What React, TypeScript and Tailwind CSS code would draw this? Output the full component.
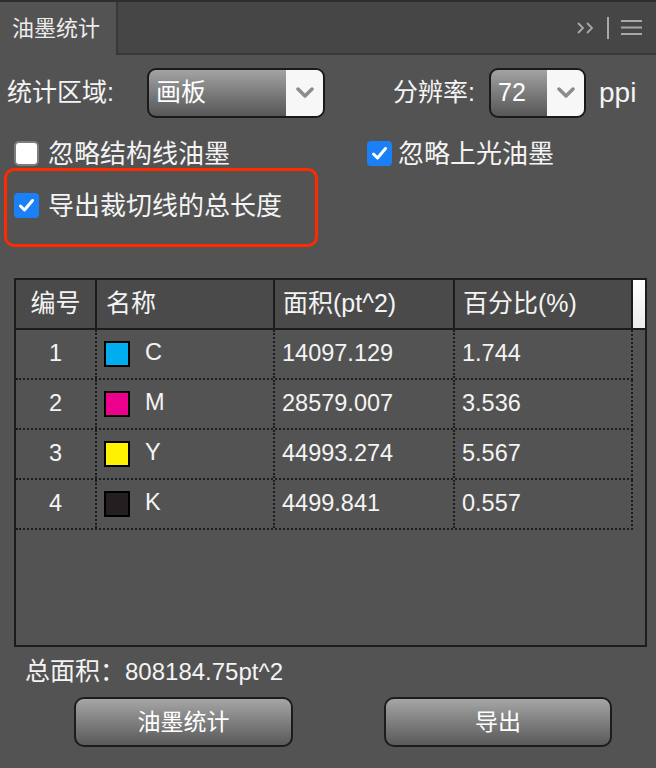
import React from 'react';

const font = { fontFamily: '"Liberation Sans", "Noto Sans CJK SC", sans-serif' };

const Chevron = () => (
  <svg width="18" height="12" viewBox="0 0 18 12">
    <polyline points="2,2 9,9 16,2" fill="none" stroke="#8c8c8c" strokeWidth="3.5" strokeLinecap="round" strokeLinejoin="round" />
  </svg>
);

const Select: React.FC<{ value: string; width: string; text: string }> = ({ value, width, text }) => (
  <div className={`flex h-[50px] ${width} overflow-hidden rounded-[9px] border-2 border-[#1a1a1a] bg-gradient-to-b from-[#a3a3a3] to-[#575757]`}>
    <div className={`flex flex-1 items-center pl-[7px] ${text} text-white`}>{value}</div>
    <div className="flex w-[37px] items-center justify-center bg-[#f7f7f7]">
      <Chevron />
    </div>
  </div>
);

const Check: React.FC<{ on: boolean }> = ({ on }) =>
  on ? (
    <div className="flex h-[25px] w-[25px] shrink-0 items-center justify-center rounded-[4px] bg-[#1b80f5]">
      <svg width="17" height="15" viewBox="0 0 17 15">
        <polyline points="2.5,8 6.5,12 14.5,2.5" fill="none" stroke="white" strokeWidth="3" strokeLinecap="round" strokeLinejoin="round" />
      </svg>
    </div>
  ) : (
    <div className="h-[25px] w-[25px] shrink-0 rounded-[5px] border-2 border-[#7d7d7d] bg-white" />
  );

const rows = [
  { n: '1', color: 'bg-[#00aeef]', name: 'C', area: '14097.129', pct: '1.744' },
  { n: '2', color: 'bg-[#ec008c]', name: 'M', area: '28579.007', pct: '3.536' },
  { n: '3', color: 'bg-[#fff200]', name: 'Y', area: '44993.274', pct: '5.567' },
  { n: '4', color: 'bg-[#231f20]', name: 'K', area: '4499.841', pct: '0.557' },
];

export default function App() {
  return (
    <div className="h-[768px] w-[656px] overflow-hidden bg-[#535353] text-[24px] text-[#f4f4f4]" style={font}>
      {/* panel tab bar */}
      <div className="flex h-[55px] border-t-2 border-[#2e2e2e]">
        <div className="flex w-[116px] items-center pl-[12px] text-[22px] text-[#ececec]">油墨统计</div>
        <div className="flex flex-1 items-center justify-end gap-[12px] border-b-2 border-l-2 border-[#383838] bg-[#464646] pr-[14px]">
          <svg width="19" height="14" viewBox="0 0 19 14">
            <polyline points="2,2 7,7 2,12" fill="none" stroke="#a8a8a8" strokeWidth="1.8" />
            <polyline points="11,2 16,7 11,12" fill="none" stroke="#a8a8a8" strokeWidth="1.8" />
          </svg>
          <div className="h-[22px] w-[2px] bg-[#a8a8a8]" />
          <svg width="21" height="15" viewBox="0 0 21 15">
            <rect x="0" y="0" width="21" height="2" fill="#a8a8a8" />
            <rect x="0" y="6.5" width="21" height="2" fill="#a8a8a8" />
            <rect x="0" y="13" width="21" height="2" fill="#a8a8a8" />
          </svg>
        </div>
      </div>

      {/* area / resolution */}
      <div className="mt-[13px] flex h-[50px] items-center pl-[7px] text-[25px]">
        <div className="w-[140px]">统计区域:</div>
        <Select value="画板" width="w-[178px]" text="text-[25px]" />
        <div className="ml-[68px] w-[96px]">分辨率:</div>
        <Select value="72" width="w-[97px]" text="text-[25px]" />
        <div className="ml-[13px] text-[28px]">ppi</div>
      </div>

      {/* options */}
      <div className="mt-[23px] flex h-[25px] items-center text-[26px] leading-none">
        <div className="flex w-[367px] items-center gap-[9px] pl-[14px]">
          <Check on={false} />
          <span>忽略结构线油墨</span>
        </div>
        <div className="flex items-center gap-[6px]">
          <Check on />
          <span>忽略上光油墨</span>
        </div>
      </div>
      <div className="ml-[4px] mt-[2px] h-[79px] w-[314px] rounded-[10px] border-[3px] border-[#ff2a00] pl-[7px] pt-[22px]">
        <div className="flex h-[25px] items-center gap-[9px] text-[26px] leading-none">
          <Check on />
          <span>导出裁切线的总长度</span>
        </div>
      </div>

      {/* table */}
      <div className="ml-[14px] mt-[31px] h-[369px] w-[633px] border-2 border-[#1c1c1c]">
        <div className="flex h-[50px] border-b-2 border-[#1c1c1c] bg-[#4a4a4a] text-[25px]">
          <div className="flex w-[81px] items-center justify-center border-r-2 border-[#1c1c1c]">编号</div>
          <div className="flex w-[178px] items-center border-r-2 border-[#1c1c1c] pl-[9px]">名称</div>
          <div className="flex w-[180px] items-center border-r-2 border-[#1c1c1c] pl-[8px]">面积(pt^2)</div>
          <div className="flex w-[178px] items-center border-r-2 border-[#1c1c1c] pl-[8px]">百分比(%)</div>
          <div className="flex-1 bg-gradient-to-b from-white to-[#ececec]" />
        </div>
        {rows.map((r) => (
          <div key={r.n} className="flex h-[50px] w-[617px] border-b-2 border-r-2 border-dotted border-[#1c1c1c] text-[23.5px]">
            <div className="flex w-[81px] items-center justify-center border-r-2 border-dotted border-[#1c1c1c]">{r.n}</div>
            <div className="flex w-[178px] items-center border-r-2 border-dotted border-[#1c1c1c] pl-[7px]">
              <div className={`h-[26px] w-[26px] border-2 border-black ${r.color}`} />
              <span className="-mt-[3px] ml-[15px]">{r.name}</span>
            </div>
            <div className="flex w-[180px] items-center border-r-2 border-dotted border-[#1c1c1c] pl-[7px]">{r.area}</div>
            <div className="flex flex-1 items-center pl-[7px]">{r.pct}</div>
          </div>
        ))}
      </div>

      {/* total */}
      <div className="mt-[10px] flex h-[30px] items-center pl-[25px]">
        <span className="text-[25px]">总面积：</span>
        <span className="text-[24px]">808184.75pt^2</span>
      </div>

      {/* buttons */}
      <div className="mt-[10px] flex h-[50px] text-[23px]">
        <button className="ml-[74px] h-[50px] w-[219px] rounded-[10px] border-2 border-[#1c1c1c] bg-gradient-to-b from-[#a6a6a6] to-[#5a5a5a] text-white">
          油墨统计
        </button>
        <button className="ml-[91px] h-[50px] w-[228px] rounded-[10px] border-2 border-[#1c1c1c] bg-gradient-to-b from-[#a6a6a6] to-[#5a5a5a] text-white">
          导出
        </button>
      </div>
    </div>
  );
}
